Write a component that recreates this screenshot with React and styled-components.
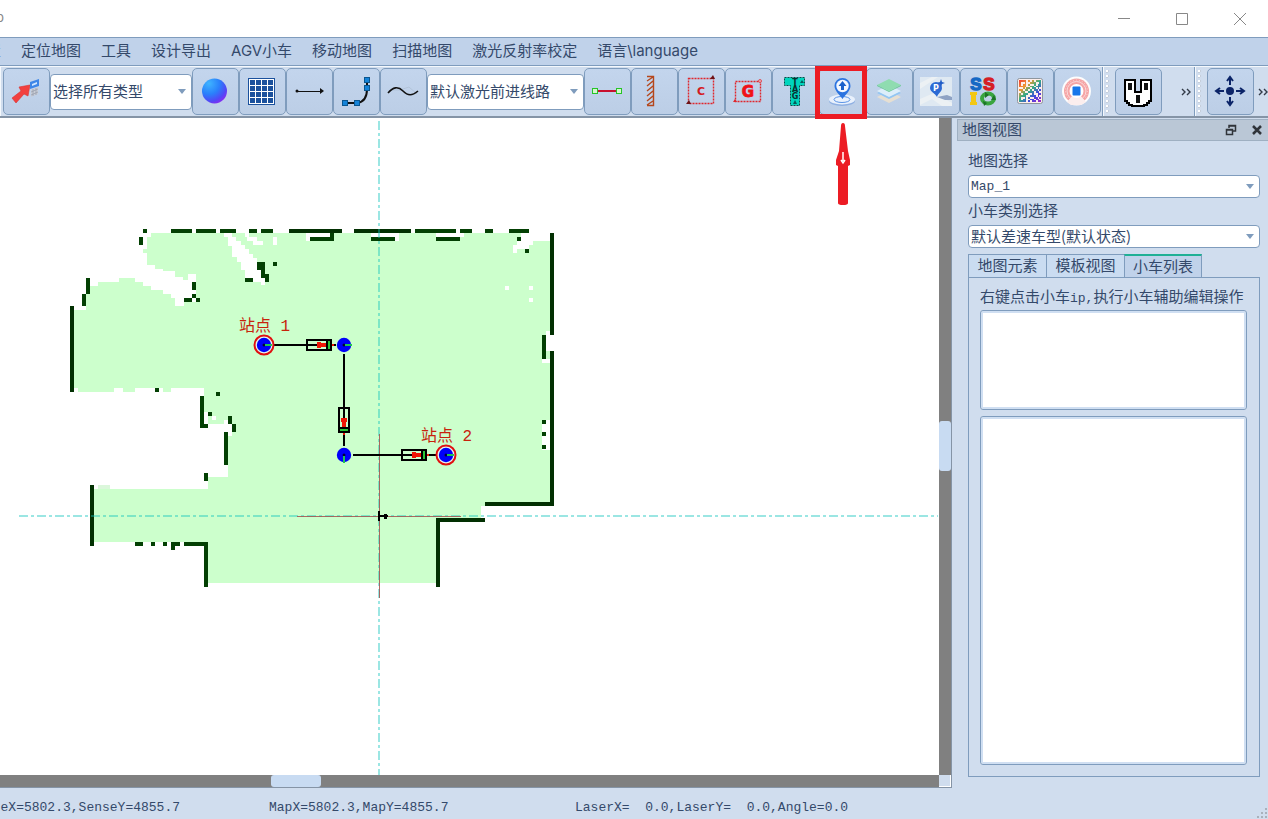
import React from 'react';
import styled, { createGlobalStyle, css } from 'styled-components';

const sans = 'Inter, "Noto Sans CJK SC", sans-serif';
const cjk = '"Noto Sans CJK SC", sans-serif';
const mono = '"Liberation Mono", "Noto Sans CJK SC", monospace';

const ink = '#34496a';
const line = '#7f9cbd';
const panel = '#d0ddee';
const face = '#c0d2ea';

const GlobalStyle = createGlobalStyle`
  *, *::before, *::after { box-sizing: border-box; }
  body {
    margin: 0;
    overflow: hidden;
    color: ${ink};
    font: 15px/20px ${cjk};
    background: ${panel};
  }
  button, select { font: inherit; color: inherit; }
  button { padding: 0; border: 0; background: none; }
  svg { display: block; flex: none; }
`;

const Window = styled.div`
  display: flex;
  flex-direction: column;
  height: 100vh;
`;

const TitleBar = styled.header`
  display: flex;
  align-items: center;
  justify-content: space-between;
  height: 37px;
  flex: none;
  background: #fff;
`;

const AppName = styled.span`
  width: 4px;
  display: flex;
  justify-content: flex-end;
  padding-bottom: 4px;
  font: 13px/16px ${sans};
  color: #888;
`;

const WindowButtons = styled.div`
  display: flex;
`;

const WindowButton = styled.button`
  width: 58px;
  height: 35px;
  padding-left: 2px;
  display: flex;
  align-items: center;
  justify-content: center;
`;

const MenuBar = styled.nav`
  display: flex;
  align-items: center;
  height: 29px;
  flex: none;
  margin-left: -39px;
  padding-bottom: 2px;
  border-top: 1px solid ${line};
  border-bottom: 1px solid ${line};
  background: ${face};
`;

const MenuItem = styled.button`
  padding: 0 10px;
  font-family: ${sans};
  white-space: nowrap;
`;

const ToolBar = styled.div`
  display: flex;
  height: 52px;
  flex: none;
  border-top: 1px solid #f4f8fc;
  border-bottom: 2px solid #8594a6;
  background: ${panel};
`;

const ToolGroup = styled.div`
  display: flex;
  align-items: center;
  flex: ${props => (props.$fill ? '1 0 auto' : 'none')};
  width: ${props => props.$width || 'auto'};
  padding: 0 1px 0 3px;
  border-right: 1px solid ${line};
  box-shadow: inset 1px 0 #f4f8fc;
`;

const Grip = styled.span`
  width: 4px;
  height: 44px;
  margin-right: 5px;
  background: radial-gradient(circle at 1px 1px, #fff 1px, #9cabc0 2px, transparent 2px) 0 0 / 4px 5px;
`;

const ToolSlot = styled.div`
  position: relative;
`;

const ToolButton = styled.button`
  width: 47px;
  height: 47px;
  display: flex;
  padding-left: 6px;
  align-items: center;
  border: 1px solid ${line};
  border-radius: 5px;
  background: linear-gradient(#c3d5ed, #bccee6);
`;

const MoreButton = styled.button`
  width: 16px;
  height: 47px;
  margin-left: ${props => (props.$end ? 'auto' : '0')};
  display: flex;
  align-items: center;
  justify-content: flex-end;
`;

const Frame = styled.div`
  position: absolute;
  z-index: 2;
  left: -4px;
  top: -2px;
  width: 52px;
  height: 53px;
  border: 5px solid #ec1c24;
  pointer-events: none;
`;

const Pointer = styled.svg`
  position: absolute;
  z-index: 2;
  left: 16px;
  top: 54px;
  pointer-events: none;
`;

const ComboBox = styled.div`
  position: relative;
  width: ${props => props.$width || '100%'};
`;

const ComboSelect = styled.select`
  appearance: none;
  display: block;
  width: 100%;
  height: ${props => (props.$tall ? '36px' : '23px')};
  padding: 0 20px 2px 2px;
  border: 1px solid ${line};
  border-radius: 4px;
  background: #fff;
  ${props =>
    props.$mono &&
    css`
      padding-bottom: 0;
      font-family: ${mono};
      font-size: 13px;
    `}
`;

const ComboArrow = styled.svg`
  position: absolute;
  right: 5px;
  top: calc(50% - 3px);
  pointer-events: none;
`;

const Main = styled.main`
  display: flex;
  flex: 1;
  min-height: 0;
`;

const MapView = styled.section`
  flex: 1;
  display: grid;
  grid-template-columns: 1fr 12px;
  grid-template-rows: 1fr 12px;
  border-right: 1px solid #8594a6;
  border-bottom: 1px solid #8594a6;
  min-width: 0;
`;

const MapCanvas = styled.div`
  background: #fff;
  overflow: hidden;
`;

const Track = styled.div`
  display: grid;
  background: #808080;
  ${props => (props.$vertical ? 'grid-template-rows' : 'grid-template-columns')}: ${props => props.$split};
`;

const Thumb = styled.div`
  ${props => (props.$vertical ? 'grid-row: 2' : 'grid-column: 2')};
  border-radius: 3px;
  background: #c8dbf2;
`;

const Corner = styled.div`
  background: ${panel};
  border-right: 1px solid #fff;
  border-bottom: 1px solid #fff;
`;

const Dock = styled.aside`
  width: 316px;
  flex: none;
  display: flex;
  flex-direction: column;
  padding: 1px 0 11px 5px;
`;

const DockTitle = styled.div`
  display: flex;
  align-items: center;
  height: 22px;
  padding: 0 5px 0 4px;
  gap: 14px;
  border: 1px solid #9fb0c2;
  border-right: 0;
  background: #bac7d6;
`;

const DockName = styled.h2`
  flex: 1;
  margin: 0;
  padding-bottom: 2px;
  font: inherit;
`;

const DockBody = styled.div`
  flex: 1;
  display: flex;
  flex-direction: column;
  padding: 10px 8px 0 11px;
`;

const Label = styled.label`
  height: 20px;
  margin-bottom: 4px;
  line-height: 18px;
`;

const Field = styled.div`
  display: flex;
  flex-direction: column;
  margin-bottom: 3px;
`;

const Tabs = styled.div`
  display: flex;
  margin-top: 3px;
`;

const Tab = styled.button`
  width: 78px;
  height: 23px;
  padding-bottom: 2px;
  border: 1px solid ${line};
  border-bottom: 0;
  background: #cadcf1;
  ${props =>
    props.$active
      ? css`
          border-top: 2px solid #1fb095;
          background: ${face};
        `
      : css`
          border-right: 0;
        `}
`;

const TabPane = styled.div`
  flex: 1;
  display: flex;
  flex-direction: column;
  gap: 6px;
  padding: 8px 12px 11px 11px;
  border: 1px solid ${line};
`;

const Hint = styled.p`
  height: 18px;
  margin: 0;
  line-height: 20px;
  white-space: nowrap;
`;

const Latin = styled.span`
  font-family: ${mono};
  font-size: 13px;
`;

const ListBox = styled.ul`
  flex: ${props => (props.$fill ? '1' : '0 0 100px')};
  margin: 0;
  padding: 0;
  border: 1px solid ${line};
  border-radius: 3px;
  background: #fff;
  box-shadow: inset 0 0 0 2px #d0dff2;
`;

const StatusBar = styled.footer`
  height: 31px;
  flex: none;
  display: grid;
  grid-template-columns: 180px 217px 1fr 12px;
  column-gap: 89px;
  align-items: center;
  padding-top: 8px;
  font: 13px/20px ${mono};
  white-space: pre;
`;

const StatusText = styled.span`
  display: flex;
  justify-content: ${props => (props.$end ? 'flex-end' : 'flex-start')};
`;

const SizeGrip = styled.svg`
  justify-self: end;
  align-self: end;
`;

const Caption = styled.text`
  font-family: ${mono};
  font-size: 16px;
  fill: #c8230c;
`;

const Glyph = styled.text`
  font-family: ${props => props.$face || '"DejaVu Sans"'}, sans-serif;
  font-weight: bold;
  font-size: ${props => props.$size};
  text-anchor: middle;
`;

/* toolbar drawings, all on a 33 x 33 field */

const SendIcon = () => (
  <>
    <path d="M9 12 20 10 18 21 14 19 6 28 2 23 11 16Z" fill="#f2403f" stroke="#d8302f" strokeWidth=".6" />
    <path d="M20 7 29 4V11L20 14Z" fill="#3c86e8" />
    <path d="M22 9 27 7V9L22 11Z" fill="#cfe6ff" />
    <path d="M21 15 28 12V19L21 22Z" fill="#c9cdd6" />
    <path d="M21 17 28 14M21 20 28 17M23 14V21M26 13V20" stroke="#8d94a5" strokeWidth=".6" />
  </>
);

const SphereIcon = () => (
  <>
    <defs>
      <radialGradient id="ball" cx=".28" cy=".2" r=".95">
        <stop offset="0" stopColor="#3fb4ff" />
        <stop offset=".45" stopColor="#2a80fb" />
        <stop offset=".75" stopColor="#5148f6" />
        <stop offset="1" stopColor="#a21cf0" />
      </radialGradient>
    </defs>
    <circle cx="15.5" cy="16" r="12.5" fill="url(#ball)" />
  </>
);

const GridIcon = () => (
  <g shapeRendering="crispEdges">
    <rect x="2.5" y="3.5" width="26" height="26" fill="#fff" stroke="#1b519d" />
    {[0, 1, 2, 3].map(r =>
      [0, 1, 2, 3].map(c => (
        <rect key={`${r}${c}`} x={4 + c * 6} y={5 + r * 6} width="5" height="5" fill="#1b519d" />
      ))
    )}
  </g>
);

const ArrowLineIcon = () => (
  <>
    <path d="M4 16H28" stroke="#111" strokeWidth="1" shapeRendering="crispEdges" />
    <circle cx="4" cy="16" r="1.5" fill="#111" />
    <path d="M27 13 31 16 27 19Z" fill="#111" />
  </>
);

const CurveIcon = () => (
  <>
    <path d="M5 28H17C25 27 27 20 27 14V5" fill="none" stroke="#111" strokeWidth="2" />
    {[[27, 5], [27, 13], [5, 28], [17, 28]].map(([x, y]) => (
      <rect key={`${x}-${y}`} x={x - 2.5} y={y - 2.5} width="5" height="5" fill="#1583d8" stroke="#0a568f" />
    ))}
  </>
);

const WaveIcon = () => (
  <>
    <path d="M3 15 13 15 22 12 30 19" fill="none" stroke="#a4b4c9" strokeWidth=".5" />
    <path d="M1 18C6 12 11 11 16 16S25 21 31 16" fill="none" stroke="#111" strokeWidth="1.6" />
  </>
);

const SegmentIcon = () => (
  <>
    <path d="M6 16H26" stroke="#c8102e" strokeWidth="2" />
    <rect x="1.5" y="13.5" width="5" height="5" fill="#d6f5d0" stroke="#27c427" />
    <rect x="25.5" y="13.5" width="5" height="5" fill="#d6f5d0" stroke="#27c427" />
  </>
);

const HatchIcon = () => (
  <path
    d="M9 1.5H15.5V30.5H9M9 6 15 2M9 11 15 6M9 16 15 11M9 21 15 16M9 26 15 21M9 30 15 26"
    fill="none"
    stroke="#b5471c"
    strokeWidth="1.4"
  />
);

const AreaCIcon = () => (
  <>
    <rect x="3.5" y="3.5" width="25" height="25" fill="none" stroke="#e0262c" strokeWidth="1.4" strokeDasharray="2 1" />
    <path d="M25 4 28 0 30 4ZM1 29 4 25 6 29Z" fill="#6d1216" />
    <Glyph x="16" y="20" $size="11px" fill="#d41a1f">C</Glyph>
  </>
);

const AreaGIcon = () => (
  <>
    <rect x="3.5" y="6.5" width="25" height="20" fill="none" stroke="#e0262c" strokeWidth="1.4" strokeDasharray="2 1" />
    <circle cx="28" cy="6" r="1.5" fill="#e8b5c0" stroke="#e0262c" strokeWidth=".7" />
    <path d="M1 27 3 24 5 27Z" fill="#e0262c" />
    <Glyph x="16" y="22" $size="15px" fill="#f01218" stroke="#f01218" strokeWidth=".8">G</Glyph>
  </>
);

const TagIcon = () => (
  <>
    <path d="M5.5 2.5H25.5V10.5H20.5V30.5H11.5V10.5H5.5Z" fill="#00d5bd" stroke="#064c48" strokeDasharray="2 1" />
    <Glyph x="16" y="10" $size="8px" fill="#092f30">T</Glyph>
    <Glyph x="16" y="17" $size="8px" fill="#092f30">A</Glyph>
    <Glyph x="16" y="24" $size="8px" fill="#092f30">G</Glyph>
    <path d="M14 29 16 25 18 29ZM21 8 23 5 25 8Z" fill="#075a5a" />
  </>
);

const LocateIcon = () => (
  <>
    <ellipse cx="16" cy="26" rx="13" ry="5" fill="#8fb0e2" />
    <ellipse cx="16" cy="24.5" rx="13" ry="5" fill="#e9f1fc" />
    <ellipse cx="16" cy="24.5" rx="8" ry="3" fill="none" stroke="#5b94e6" />
    <path d="M16.500 3A8 8 0 0 1 24.500 11C24.500 16 19 20 16.500 24C14 20 8.500 16 8.500 11A8 8 0 0 1 16.500 3Z" fill="#2c74e0" />
    <circle cx="16.500" cy="11" r="6.200" fill="#f4f8ff" />
    <path d="M16.500 6 20.500 11H18V15H15V11H12.500Z" fill="#1c62cc" />
  </>
);

const LayersIcon = () => (
  <>
    <path d="M16 16 28 22 16 28 4 22Z" fill="#e6dfd2" />
    <path d="M16 12 28 18 16 24 4 18Z" fill="#93c6f2" />
    <path d="M16 10 28 16 16 22 4 16Z" fill="#dceefa" />
    <path d="M16 4 28 10 16 16 4 10Z" fill="#8fdcb0" />
    <path d="M4 10 16 16 28 10V11L16 17 4 11Z" fill="#6bc896" />
  </>
);

const ParkIcon = () => (
  <>
    <rect y="2" width="32" height="29" fill="#dfe9f2" />
    <path d="M0 8 12 2H18L0 14ZM0 24 14 18 32 28V31H22L12 24 0 30Z" fill="#ecf1f4" />
    <path d="M17 22 27 20 32 22V25L25 25Z" fill="#8ea2c4" />
    <path d="M16 7A6 6 0 0 1 22 13C22 17 18 18 17 22C15 18 10 17 10 13A6 6 0 0 1 16 7Z" fill="#2d6bd4" />
    <path d="M21 4 22 7 25 8 22 9 21 12 20 9 17 8 20 7Z" fill="#1e5bc6" />
    <Glyph x="16" y="16" $size="8px" fill="#fff">P</Glyph>
  </>
);

const SsioIcon = () => (
  <>
    <Glyph x="9" y="15" $size="17px" $face='"Liberation Sans"' fill="#1769c4" stroke="#1769c4" strokeWidth="1.4">S</Glyph>
    <Glyph x="22" y="15" $size="17px" $face='"Liberation Sans"' fill="#d51f26" stroke="#d51f26" strokeWidth="1.4">S</Glyph>
    <path d="M3 17H10V20H9V27H10V30H3V27H4V20H3Z" fill="#f3c713" />
    <ellipse cx="21" cy="23.500" rx="6" ry="5" fill="none" stroke="#3aa540" strokeWidth="4" />
    <path d="M18 17 22 20 18 23ZM27 20 24 25 29 25ZM16 26 20 28 17 31Z" fill="#1d7328" />
  </>
);

const QR = [
  '111101010111',
  '100100111001',
  '101101001011',
  '111100110111',
  '001011011010',
  '110110101101',
  '011001110110',
  '101110010011',
  '111100111010',
  '100101001101',
  '101100110110',
  '111101011011',
];

const QrIcon = () => (
  <>
    <defs>
      <linearGradient id="rainbow" gradientUnits="userSpaceOnUse" x1="6" y1="5" x2="27" y2="28">
        <stop offset="0" stopColor="#f04436" />
        <stop offset=".25" stopColor="#f09a30" />
        <stop offset=".45" stopColor="#35ad84" />
        <stop offset=".7" stopColor="#4048e0" />
        <stop offset="1" stopColor="#a824c4" />
      </linearGradient>
    </defs>
    <rect x="3.500" y="3.500" width="25" height="25" rx="2" fill="#fdeeea" stroke="#8e969e" />
    <path
      fill="url(#rainbow)"
      shapeRendering="crispEdges"
      d={QR.map((row, r) =>
        row
          .split('')
          .map((bit, c) => (bit === '1' ? `M${5 + c * 1.85} ${5 + r * 1.85}h1.85v1.85h-1.85z` : ''))
          .join('')
      ).join('')}
    />
  </>
);

const RadarIcon = () => (
  <>
    <circle cx="15.500" cy="16" r="14.500" fill="#fdfdfd" />
    <circle cx="15.500" cy="16" r="12.500" fill="#f5a5a6" />
    <circle cx="15.500" cy="16" r="9.500" fill="none" stroke="#fbd9da" />
    <circle cx="15.500" cy="16" r="11" fill="none" stroke="#fbd9da" strokeDasharray="1 2" />
    <path d="M6 27 15.500 16 25 27 20 30H10Z" fill="#fbeeee" />
    <circle cx="15.500" cy="16" r="7" fill="#fff" />
    <rect x="11.500" y="11.500" width="8" height="9" rx="1" fill="#1877ea" />
  </>
);

const SocketIcon = () => (
  <g shapeRendering="crispEdges">
    <path
      d="M3 5H13V17H19V5H29V26H27V28H25V30H22V31H10V30H7V28H5V26H3Z"
      fill="#fff"
      stroke="#000"
      strokeWidth="2"
    />
    <path d="M6 8H10V15H6ZM22 8H26V15H22ZM14 20H18V28H14Z" fill="#111" />
  </g>
);

const MoveIcon = () => (
  <>
    <circle cx="16" cy="16" r="4" fill="#0b2468" />
    <path
      d="M16 10V3M13 6 16 2 19 6M16 22V29M13 26 16 30 19 26M10 16H3M6 13 2 16 6 19M22 16H29M26 13 30 16 26 19"
      fill="none"
      stroke="#0b2468"
      strokeWidth="2"
    />
  </>
);

const Tool = ({ name, icon: Icon, children }) => (
  <ToolSlot>
    <ToolButton type="button" aria-label={name}>
      <svg width="33" height="33" viewBox="0 0 33 33" aria-hidden="true">
        <Icon />
      </svg>
    </ToolButton>
    {children}
  </ToolSlot>
);

const Combo = ({ id, name, value, width, tall, monospaced }) => (
  <ComboBox $width={width}>
    <ComboSelect id={id} aria-label={name} $tall={tall} $mono={monospaced}>
      <option>{value}</option>
    </ComboSelect>
    <ComboArrow width="10" height="5" viewBox="0 0 10 5">
      <path d="M1 0H9L5 5Z" fill="#7f9cbd" />
    </ComboArrow>
  </ComboBox>
);

const More = ({ end }) => (
  <MoreButton type="button" aria-label="更多" $end={end}>
    <svg width="13" height="10" viewBox="0 0 13 10">
      <path d="M2 2 5 5 2 8M7 2 10 5 7 8" fill="none" stroke="#333b48" strokeWidth="1.4" />
    </svg>
  </MoreButton>
);

const floor =
  'M151 233H550V502H485V506H481V518H436V583H208V542H94V489H208V477H228V436H232V424H228V420H224V424H208V412H204V388H171V392H163V388H135V392H123V388H114V392H78V388H74V310H86V294H90V286H98V282H119V278H135V282H143V286H151V290H163V294H171V298H175V306H184V302H196V274H188V280H183V277H175V271H163V269H155V265H147V253H143V249H147V237H151Z';

const holes =
  'M224 233H232V237H236V241H241V245H245V249H249V254H253V258H257V270H261V278H265V285H261V282H253V278H245V270H241V262H237V257H232V246H228V237H224Z' +
  'M245 233H249V237H257V241H263V245H253V241H247V237H245ZM273 237H277V245H273Z' +
  'M306 233H330V237H310V241H306ZM371 233H399V241H395V237H371ZM436 233H464V237H436Z' +
  'M521 233H550V241H533V245H529V249H517V253H513V245H517V241H521Z' +
  'M505 286h4v4h-4ZM529 286h4v4h-4ZM529 298h4v4h-4Z' +
  'M546 331H550V335H554V351H546ZM542 359H550V363H542ZM542 420H550V450H542ZM212 416h4v4h-4Z';

const walls = [
  [171, 229, 21, 4], [196, 229, 20, 4], [220, 229, 16, 4], [249, 229, 8, 4], [261, 229, 12, 4],
  [289, 229, 53, 4], [354, 229, 57, 4], [415, 229, 41, 4], [460, 229, 12, 4], [485, 229, 8, 4],
  [509, 229, 20, 4], [143, 229, 4, 4], [139, 237, 4, 8], [310, 237, 24, 4], [330, 233, 4, 4],
  [371, 237, 24, 4], [436, 237, 24, 4], [517, 237, 4, 4], [525, 249, 4, 4], [550, 233, 4, 102],
  [542, 335, 4, 24], [550, 351, 4, 155], [485, 502, 69, 4], [436, 518, 49, 4], [436, 518, 4, 69],
  [542, 420, 4, 4], [542, 432, 4, 4], [542, 445, 4, 4], [204, 542, 4, 45], [184, 542, 24, 4],
  [135, 542, 8, 4], [151, 542, 4, 4], [163, 542, 4, 4], [171, 542, 9, 4], [171, 546, 4, 4],
  [90, 485, 4, 61], [224, 432, 4, 33], [228, 416, 4, 8], [232, 424, 4, 8], [200, 396, 4, 32],
  [204, 424, 4, 4], [208, 412, 4, 4], [216, 392, 4, 4], [204, 473, 4, 8], [70, 306, 4, 86],
  [155, 388, 4, 4], [86, 278, 4, 16], [82, 294, 4, 12], [192, 282, 4, 8], [192, 294, 4, 4],
  [184, 298, 8, 4], [196, 298, 4, 4], [257, 262, 8, 8], [261, 270, 4, 4], [261, 274, 8, 4],
  [265, 274, 4, 8], [245, 278, 8, 4], [273, 262, 4, 4],
];

const nodes = [
  { x: 264, y: 345, station: true },
  { x: 344, y: 345 },
  { x: 344, y: 455, down: true },
  { x: 446, y: 455, station: true },
];

const vehicles = [
  { x: 319, y: 345, turn: 0 },
  { x: 344, y: 420, turn: 90 },
  { x: 414, y: 455, turn: 0 },
];

const FactoryMap = () => (
  <svg width="100%" height="100%" role="img" aria-label="Map_1">
    <g transform="translate(0 -118)">
      <g shapeRendering="crispEdges">
        <path d={floor} fill="#ccffcc" />
        <path d="M98 485H110V489H98Z" fill="#dbf7db" />
        <path d={holes} fill="#fff" />
        {walls.map(([x, y, w, h]) => (
          <rect key={`${x}-${y}-${w}`} x={x} y={y} width={w} height={h} fill={w + h > 50 ? '#023002' : '#034003'} />
        ))}
        <g stroke="#10c4bc" strokeOpacity=".42" strokeWidth="2" strokeDasharray="9 3 3 3">
          <path d="M379 121V775" />
          <path d="M19 516H938" />
        </g>
        <path d="M379.500 434V598M297 516.500H461" stroke="#a3504c" strokeOpacity=".85" />
        <path d="M379 511V521M379 516H388" stroke="#000" strokeWidth="2" />
        <path d="M384 514H387V519H384Z" fill="#000" />
        <path d="M273 345H336M344 354V446M353 455H437" stroke="#000" strokeWidth="2" />
      </g>
      {vehicles.map(({ x, y, turn }) => (
        <g key={`${x}-${y}`} transform={`translate(${x} ${y}) rotate(${turn})`}>
          <rect x="-12" y="-5" width="24" height="10" fill="none" stroke="#000" strokeWidth="2" />
          <path d="M8-5V5" stroke="#000" strokeWidth="2" />
          <path d="M-2-3H2V-2H7V2H2V3H-2Z" fill="#f01505" />
          <rect x="9" y="-4" width="2" height="8" fill="#2bc735" />
          <path d="M13 0H15" stroke="#f01505" strokeWidth="2" />
        </g>
      ))}
      {nodes.map(({ x, y, station, down }) => (
        <g key={`${x}-${y}`} transform={`translate(${x} ${y})`}>
          {station && <circle r="9.500" fill="#e4f4f0" stroke="#e01010" strokeWidth="2" />}
          <circle r="7.200" fill="#0000fa" />
          <circle r="1.500" fill="#000040" />
          <path d={down ? 'M0 1V8' : 'M1 0H8'} stroke="#1fc552" strokeWidth="2" />
        </g>
      ))}
      <Caption x="239" y="331">站点 1</Caption>
      <Caption x="421" y="441">站点 2</Caption>
    </g>
  </svg>
);

const menus = ['设置', '定位地图', '工具', '设计导出', 'AGV小车', '移动地图', '扫描地图', '激光反射率校定', '语言\\language'];

export default function App() {
  return (
    <Window>
      <GlobalStyle />
      <TitleBar>
        <AppName>p</AppName>
        <WindowButtons>
          <WindowButton type="button" aria-label="最小化">
            <svg width="14" height="14"><path d="M1 6.500H13" stroke="#888" /></svg>
          </WindowButton>
          <WindowButton type="button" aria-label="最大化">
            <svg width="14" height="14"><path d="M1.500 1.500H12.500V12.500H1.500Z" fill="none" stroke="#888" /></svg>
          </WindowButton>
          <WindowButton type="button" aria-label="关闭">
            <svg width="14" height="14"><path d="M1 1 13 13M13 1 1 13" stroke="#888" /></svg>
          </WindowButton>
        </WindowButtons>
      </TitleBar>
      <MenuBar>
        {menus.map(menu => (
          <MenuItem key={menu} type="button">{menu}</MenuItem>
        ))}
      </MenuBar>
      <ToolBar>
        <ToolGroup>
          <Tool name="发送" icon={SendIcon} />
          <Combo name="类型" value="选择所有类型" width="142px" tall />
          <Tool name="球体" icon={SphereIcon} />
          <Tool name="网格" icon={GridIcon} />
          <Tool name="直线" icon={ArrowLineIcon} />
          <Tool name="曲线" icon={CurveIcon} />
          <Tool name="样条" icon={WaveIcon} />
          <Combo name="线路" value="默认激光前进线路" width="157px" tall />
          <Tool name="线段" icon={SegmentIcon} />
          <Tool name="墙体" icon={HatchIcon} />
          <Tool name="区域 C" icon={AreaCIcon} />
          <Tool name="区域 G" icon={AreaGIcon} />
          <Tool name="标签" icon={TagIcon} />
          <Tool name="定位" icon={LocateIcon}>
            <Frame />
            <Pointer width="16" height="84" viewBox="0 0 16 84">
              <path
                d="M8 1Q10 1 10 4L13 29 15 38V43L13 44V81Q13 83 8 83T3 81V44L1 43V38L4 29 6 4Q6 1 8 1Z"
                fill="#ec1c24"
              />
              <path d="M8 30V39M6 38 8 41 10 38" fill="none" stroke="#fff" strokeWidth="1.500" />
            </Pointer>
          </Tool>
          <Tool name="图层" icon={LayersIcon} />
          <Tool name="停车点" icon={ParkIcon} />
          <Tool name="SSIO" icon={SsioIcon} />
          <Tool name="二维码" icon={QrIcon} />
          <Tool name="雷达" icon={RadarIcon} />
        </ToolGroup>
        <ToolGroup $width="92px">
          <Grip />
          <Tool name="充电" icon={SocketIcon} />
          <More end />
        </ToolGroup>
        <ToolGroup $fill>
          <Grip />
          <Tool name="移动" icon={MoveIcon} />
          <More />
        </ToolGroup>
      </ToolBar>
      <Main>
        <MapView>
          <MapCanvas>
            <FactoryMap />
          </MapCanvas>
          <Track $vertical $split="303fr 50px 304fr">
            <Thumb $vertical />
          </Track>
          <Track $split="271fr 50px 618fr">
            <Thumb />
          </Track>
          <Corner />
        </MapView>
        <Dock>
          <DockTitle>
            <DockName>地图视图</DockName>
            <button type="button" aria-label="浮动">
              <svg width="12" height="12">
                <path d="M4 4V1.500H10.500V7H8M4 2H11M1.500 5.500H7.500V10.500H1.500ZM1 6H8" fill="none" stroke="#30343a" strokeWidth="1.500" />
              </svg>
            </button>
            <button type="button" aria-label="关闭面板">
              <svg width="12" height="12">
                <path d="M2 2 10 10M10 2 2 10" stroke="#30343a" strokeWidth="2.500" />
              </svg>
            </button>
          </DockTitle>
          <DockBody>
            <Field>
              <Label htmlFor="map">地图选择</Label>
              <Combo id="map" value="Map_1" monospaced />
            </Field>
            <Field>
              <Label htmlFor="agv">小车类别选择</Label>
              <Combo id="agv" value="默认差速车型(默认状态)" />
            </Field>
            <Tabs role="tablist">
              <Tab type="button" role="tab">地图元素</Tab>
              <Tab type="button" role="tab">模板视图</Tab>
              <Tab type="button" role="tab" aria-selected="true" $active>小车列表</Tab>
            </Tabs>
            <TabPane role="tabpanel">
              <Hint>
                右键点击小车<Latin>ip,</Latin>执行小车辅助编辑操作
              </Hint>
              <ListBox aria-label="小车" />
              <ListBox aria-label="操作" $fill />
            </TabPane>
          </DockBody>
        </Dock>
      </Main>
      <StatusBar>
        <StatusText $end>SenseX=5802.3,SenseY=4855.7</StatusText>
        <StatusText>MapX=5802.3,MapY=4855.7</StatusText>
        <StatusText>{'LaserX=  0.0,LaserY=  0.0,Angle=0.0'}</StatusText>
        <SizeGrip width="12" height="12" viewBox="0 0 12 12">
          <path d="M9 1h2v2h-2zM5 5h2v2h-2zM9 5h2v2h-2zM1 9h2v2h-2zM5 9h2v2h-2zM9 9h2v2h-2z" fill="#a9b1bb" />
        </SizeGrip>
      </StatusBar>
    </Window>
  );
}
